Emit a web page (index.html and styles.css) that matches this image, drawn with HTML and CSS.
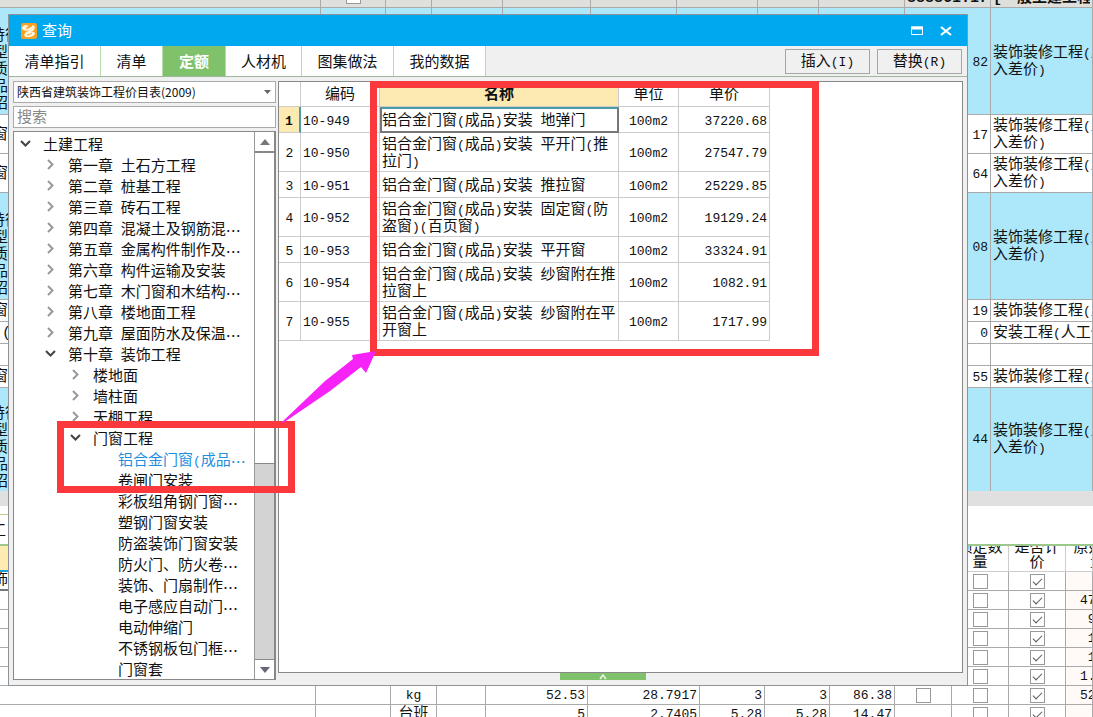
FILE: index.html
```html
<!DOCTYPE html>
<html lang="zh-CN">
<head>
<meta charset="utf-8">
<title>查询</title>
<link rel="stylesheet" href="styles.css">
</head>
<body>
<main class="desktop">
  <div class="workspace">
    <table class="grid upper">
      <colgroup><col class="w321"><col class="w65"><col class="w46"><col class="w71"><col class="w88"><col class="w86"><col class="w81"><col class="w61"><col class="w86"><col class="w86"><col></colgroup>
      <tr class="strip"><td></td><td><div class="cut mid"><input type="checkbox" aria-label="汇总"></div></td><td></td><td></td><td></td><td></td><td></td><td></td><td></td><td><div class="cut end">888861.17</div></td><td><div class="cut">[一般土建工程]</div></td></tr>
      <tr class="h107 blue"><td><div class="feature"><br><span class="pair">特征</span><br>型<br>质<br>品<br>招</div></td><td></td><td></td><td></td><td></td><td></td><td></td><td></td><td></td><td class="num">82</td><td>装饰装修工程<span class="n">(</span>人<br>入差价<span class="n">)</span></td></tr>
      <tr class="h39"><td><div class="feature">窗</div></td><td></td><td></td><td></td><td></td><td></td><td></td><td></td><td></td><td class="num">17</td><td>装饰装修工程<span class="n">(</span>人<br>入差价<span class="n">)</span></td></tr>
      <tr class="h39"><td><div class="feature">窗</div></td><td></td><td></td><td></td><td></td><td></td><td></td><td></td><td></td><td class="num">64</td><td>装饰装修工程<span class="n">(</span>人<br>入差价<span class="n">)</span></td></tr>
      <tr class="h107 blue"><td><div class="feature"><br><span class="pair">特征</span><br>型<br>质<br>品<br>招</div></td><td></td><td></td><td></td><td></td><td></td><td></td><td></td><td></td><td class="num">08</td><td>装饰装修工程<span class="n">(</span>人<br>入差价<span class="n">)</span></td></tr>
      <tr class="h22"><td><div class="feature">窗</div></td><td></td><td></td><td></td><td></td><td></td><td></td><td></td><td></td><td class="num">19</td><td>装饰装修工程<span class="n">(</span>人</td></tr>
      <tr class="h22"><td>(</td><td></td><td></td><td></td><td></td><td></td><td></td><td></td><td></td><td class="num">0</td><td>安装工程<span class="n">(</span>人工价</td></tr>
      <tr class="h22"><td></td><td></td><td></td><td></td><td></td><td></td><td></td><td></td><td></td><td></td><td></td></tr>
      <tr class="h22"><td><div class="feature">窗</div></td><td></td><td></td><td></td><td></td><td></td><td></td><td></td><td></td><td class="num">55</td><td>装饰装修工程<span class="n">(</span>人</td></tr>
      <tr class="h103 blue last"><td><div class="feature"><br><span class="pair">特征</span><br>型<br>质<br>品<br>招</div></td><td></td><td></td><td></td><td></td><td></td><td></td><td></td><td></td><td class="num">44</td><td>装饰装修工程<span class="n">(</span>人<br>入差价<span class="n">)</span></td></tr>
    </table>
    <div class="hscroll"></div>
    <div class="tabgap"><div class="pane">工</div></div>
    <table class="grid lower">
      <colgroup><col class="w316"><col class="w75"><col class="w46"><col class="w49"><col class="w102"><col class="w112"><col class="w65"><col class="w65"><col class="w65"><col class="w57"><col class="w57"><col class="w57"><col></colgroup>
      <tr class="head"><th class="current"></th><th></th><th></th><th></th><th></th><th></th><th></th><th></th><th></th><th></th><th><div>锁定数<br>量</div></th><th><div>是否计<br>价</div></th><th><div class="tail">原始<br>&nbsp;&nbsp;量</div></th></tr>
      <tr><td class="focus"><div class="feature">饰</div></td><td></td><td></td><td></td><td></td><td></td><td></td><td></td><td></td><td></td><td class="c"><input type="checkbox" aria-label="锁定数量"></td><td class="c"><input type="checkbox" aria-label="是否计价" checked></td><td class="orig"></td></tr>
      <tr><td></td><td></td><td></td><td></td><td></td><td></td><td></td><td></td><td></td><td></td><td class="c"><input type="checkbox" aria-label="锁定数量"></td><td class="c"><input type="checkbox" aria-label="是否计价" checked></td><td class="orig">47</td></tr>
      <tr><td></td><td></td><td></td><td></td><td></td><td></td><td></td><td></td><td></td><td></td><td class="c"><input type="checkbox" aria-label="锁定数量"></td><td class="c"><input type="checkbox" aria-label="是否计价" checked></td><td class="orig">&nbsp;9</td></tr>
      <tr><td></td><td></td><td></td><td></td><td></td><td></td><td></td><td></td><td></td><td></td><td class="c"><input type="checkbox" aria-label="锁定数量"></td><td class="c"><input type="checkbox" aria-label="是否计价" checked></td><td class="orig">&nbsp;1</td></tr>
      <tr><td></td><td></td><td></td><td></td><td></td><td></td><td></td><td></td><td></td><td></td><td class="c"><input type="checkbox" aria-label="锁定数量"></td><td class="c"><input type="checkbox" aria-label="是否计价" checked></td><td class="orig">&nbsp;1</td></tr>
      <tr><td></td><td></td><td></td><td></td><td></td><td></td><td></td><td></td><td></td><td></td><td class="c"><input type="checkbox" aria-label="锁定数量"></td><td class="c"><input type="checkbox" aria-label="是否计价" checked></td><td class="orig">1.</td></tr>
      <tr><td></td><td></td><td class="c n">kg</td><td></td><td class="num">52.53</td><td class="num">28.7917</td><td class="num">3</td><td class="num">3</td><td class="num">86.38</td><td class="c"><input type="checkbox" aria-label="暂估"></td><td class="c"><input type="checkbox" aria-label="锁定数量"></td><td class="c"><input type="checkbox" aria-label="是否计价" checked></td><td class="orig">52</td></tr>
      <tr><td></td><td></td><td class="c">台班</td><td></td><td class="num">5</td><td class="num">2.7405</td><td class="num">5.28</td><td class="num">5.28</td><td class="num">14.47</td><td></td><td class="c"><input type="checkbox" aria-label="锁定数量"></td><td class="c"><input type="checkbox" aria-label="是否计价" checked></td><td class="orig"></td></tr>
    </table>
  </div>

  <section class="dialog" aria-label="查询">
    <header class="titlebar">
      <svg class="logo" viewBox="0 0 16 16" aria-hidden="true"><rect width="16" height="16" rx="2" fill="#f7a021"/><path d="M1 6Q1 2 5 2L8 3Q5 4 5 6Q10 5 12 2Q15 3 13 7Q11 9 9 9Q14 8 14 11Q11 15 5 14Q2 13 4 10L8 7Q4 9 1 6Z" fill="#fff3dc"/><path d="M6 12Q9 12 11 10" fill="none" stroke="#f7a021"/></svg>
      <h1>查询</h1>
      <button class="winbtn" aria-label="最大化"><svg width="12" height="10" viewBox="0 0 12 10"><path d="M.5 1H11.500V8.500H.5Z" fill="none" stroke="#fff"/><path d="M0 2H12" stroke="#fff" stroke-width="3"/></svg></button>
      <button class="winbtn" aria-label="关闭"><svg width="12" height="10" viewBox="0 0 12 10"><path d="M1 1L11 9M11 1L1 9" stroke="#fff" stroke-width="2.2"/></svg></button>
    </header>
    <nav class="tabs">
      <button class="tab wide">清单指引</button><button class="tab">清单</button><button class="tab active">定额</button><button class="tab t76">人材机</button><button class="tab wide">图集做法</button><button class="tab wide">我的数据</button>
      <div class="actions"><button>插入<span class="n">(I)</span></button><button>替换<span class="n">(R)</span></button></div>
    </nav>
    <div class="body">
      <div class="left">
        <div class="combo"><select aria-label="定额库"><option>陕西省建筑装饰工程价目表(2009)</option></select><svg width="7" height="4" viewBox="0 0 7 4"><path d="M0 0H7L3.500 4Z" fill="#666"/></svg></div>
        <input class="search" type="text" placeholder="搜索" aria-label="搜索">
        <div class="treebox">
          <ul class="tree">
            <li class="l0"><svg class="down" viewBox="0 0 11 7"><path d="M1 1L5.500 5.500L10 1"/></svg>土建工程</li>
            <li class="l1"><svg viewBox="0 0 7 11"><path d="M1 1L5.500 5.500L1 10"/></svg>第一章<span class="n"> </span>土石方工程</li>
            <li class="l1"><svg viewBox="0 0 7 11"><path d="M1 1L5.500 5.500L1 10"/></svg>第二章<span class="n"> </span>桩基工程</li>
            <li class="l1"><svg viewBox="0 0 7 11"><path d="M1 1L5.500 5.500L1 10"/></svg>第三章<span class="n"> </span>砖石工程</li>
            <li class="l1"><svg viewBox="0 0 7 11"><path d="M1 1L5.500 5.500L1 10"/></svg>第四章<span class="n"> </span>混凝土及钢筋混<span class="e">…</span></li>
            <li class="l1"><svg viewBox="0 0 7 11"><path d="M1 1L5.500 5.500L1 10"/></svg>第五章<span class="n"> </span>金属构件制作及<span class="e">…</span></li>
            <li class="l1"><svg viewBox="0 0 7 11"><path d="M1 1L5.500 5.500L1 10"/></svg>第六章<span class="n"> </span>构件运输及安装</li>
            <li class="l1"><svg viewBox="0 0 7 11"><path d="M1 1L5.500 5.500L1 10"/></svg>第七章<span class="n"> </span>木门窗和木结构<span class="e">…</span></li>
            <li class="l1"><svg viewBox="0 0 7 11"><path d="M1 1L5.500 5.500L1 10"/></svg>第八章<span class="n"> </span>楼地面工程</li>
            <li class="l1"><svg viewBox="0 0 7 11"><path d="M1 1L5.500 5.500L1 10"/></svg>第九章<span class="n"> </span>屋面防水及保温<span class="e">…</span></li>
            <li class="l1"><svg class="down" viewBox="0 0 11 7"><path d="M1 1L5.500 5.500L10 1"/></svg>第十章<span class="n"> </span>装饰工程</li>
            <li class="l2"><svg viewBox="0 0 7 11"><path d="M1 1L5.500 5.500L1 10"/></svg>楼地面</li>
            <li class="l2"><svg viewBox="0 0 7 11"><path d="M1 1L5.500 5.500L1 10"/></svg>墙柱面</li>
            <li class="l2"><svg viewBox="0 0 7 11"><path d="M1 1L5.500 5.500L1 10"/></svg>天棚工程</li>
            <li class="l2"><svg class="down" viewBox="0 0 11 7"><path d="M1 1L5.500 5.500L10 1"/></svg>门窗工程</li>
            <li class="l3 selected">铝合金门窗<span class="n">(</span>成品<span class="e">…</span></li>
            <li class="l3">卷闸门安装</li>
            <li class="l3">彩板组角钢门窗<span class="e">…</span></li>
            <li class="l3">塑钢门窗安装</li>
            <li class="l3">防盗装饰门窗安装</li>
            <li class="l3">防火门、防火卷<span class="e">…</span></li>
            <li class="l3">装饰、门扇制作<span class="e">…</span></li>
            <li class="l3">电子感应自动门<span class="e">…</span></li>
            <li class="l3">电动伸缩门</li>
            <li class="l3">不锈钢板包门框<span class="e">…</span></li>
            <li class="l3">门窗套</li>
          </ul>
          <div class="scroll">
            <button aria-label="向上滚动"><svg width="10" height="6" viewBox="0 0 10 6"><path d="M0 6L5 0L10 6Z" fill="#777"/></svg></button>
            <div class="thumb"></div>
            <div class="track"></div>
            <button aria-label="向下滚动"><svg width="10" height="6" viewBox="0 0 10 6"><path d="M0 0L5 6L10 0Z" fill="#667"/></svg></button>
          </div>
        </div>
      </div>
      <div class="right">
        <div class="results">
          <table class="quota">
            <colgroup><col class="w22"><col class="w79"><col class="w239"><col class="w60"><col class="w91"></colgroup>
            <tr><th></th><th>编码</th><th class="on">名称</th><th>单位</th><th>单价</th></tr>
            <tr class="h26"><td class="idx on">1</td><td class="code">10-949</td><td class="picked">铝合金门窗<span class="n">(</span>成品<span class="n">)</span>安装<span class="n"> </span>地弹门</td><td class="unit">100m2</td><td class="num">37220.68</td></tr>
            <tr class="h39"><td class="idx">2</td><td class="code">10-950</td><td>铝合金门窗<span class="n">(</span>成品<span class="n">)</span>安装<span class="n"> </span>平开门<span class="n">(</span>推<br>拉门<span class="n">)</span></td><td class="unit">100m2</td><td class="num">27547.79</td></tr>
            <tr class="h26"><td class="idx">3</td><td class="code">10-951</td><td>铝合金门窗<span class="n">(</span>成品<span class="n">)</span>安装<span class="n"> </span>推拉窗</td><td class="unit">100m2</td><td class="num">25229.85</td></tr>
            <tr class="h39"><td class="idx">4</td><td class="code">10-952</td><td>铝合金门窗<span class="n">(</span>成品<span class="n">)</span>安装<span class="n"> </span>固定窗<span class="n">(</span>防<br>盗窗<span class="n">)(</span>百页窗<span class="n">)</span></td><td class="unit">100m2</td><td class="num">19129.24</td></tr>
            <tr class="h26"><td class="idx">5</td><td class="code">10-953</td><td>铝合金门窗<span class="n">(</span>成品<span class="n">)</span>安装<span class="n"> </span>平开窗</td><td class="unit">100m2</td><td class="num">33324.91</td></tr>
            <tr class="h39"><td class="idx">6</td><td class="code">10-954</td><td>铝合金门窗<span class="n">(</span>成品<span class="n">)</span>安装<span class="n"> </span>纱窗附在推<br>拉窗上</td><td class="unit">100m2</td><td class="num">1082.91</td></tr>
            <tr class="h39"><td class="idx">7</td><td class="code">10-955</td><td>铝合金门窗<span class="n">(</span>成品<span class="n">)</span>安装<span class="n"> </span>纱窗附在平<br>开窗上</td><td class="unit">100m2</td><td class="num">1717.99</td></tr>
          </table>
        </div>
        <button class="handle" aria-label="展开"><svg width="8" height="6" viewBox="0 0 8 6"><path d="M1 5L4 1L7 5" fill="none" stroke="#e9f7e4" stroke-width="1.500"/></svg></button>
      </div>
    </div>
  </section>

  <div class="mark mark-table"></div>
  <div class="mark mark-tree"></div>
  <svg class="arrow" viewBox="0 0 96 74" aria-hidden="true"><path d="M1 73L45 31L73 9L72 5L96 1L86 23L81 17L50 41L3 73Z" fill="#f722f7"/></svg>
</main>
</body>
</html>
```
FILE: styles.css
```css
* { box-sizing: border-box; }
body {
  margin: 0;
  font: 15px/17px "Liberation Mono", "Noto Sans CJK SC", monospace;
  color: #111;
  background: #fff;
}
button, input, select { font: inherit; color: inherit; margin: 0; }
.n, .num { font-family: "Liberation Mono", monospace; font-size: 13px; }
.n { white-space: pre; }
.e { font-family: "Noto Sans CJK SC", sans-serif; }

.desktop { position: relative; height: 100vh; overflow: hidden; }

/* Background sheets */
table { border-collapse: separate; border-spacing: 0; table-layout: fixed; }
.grid { width: 100%; }
.grid td, .grid th {
  padding: 2px 2px 0;
  border-right: 1px solid #aaa;
  border-bottom: 1px solid #aaa;
  white-space: nowrap;
  overflow: hidden;
  font-weight: 400;
}
.num { text-align: right; }
.blue { background: #ade8fa; }
.grid .last td { padding-top: 0; border-bottom: 0; }
.feature { margin-left: -9px; }
.pair { margin-left: -3px; }
.grid .strip td { height: 8px; padding: 0 2px; background: #dfe0dc; }
.cut { height: 7px; display: flex; align-items: flex-end; overflow: hidden; font-weight: 700; }
.cut.end { justify-content: flex-end; }
.cut.mid { justify-content: center; padding-bottom: 3px; }
.hscroll { height: 15px; background: #e0e0e0; }
.tabgap { height: 40px; padding-top: 8px; border-bottom: 2px solid #9cc88c; }
.pane { width: 316px; height: 30px; padding-top: 8px; border-top: 1px solid #c5c98f; text-indent: -9px; overflow: hidden; }
.grid.lower td { height: 19px; line-height: 16px; }
.grid.lower th { height: 26px; padding: 0; border-color: #ccc; line-height: 15px; }
.lower th div { height: 25px; display: flex; align-items: flex-end; justify-content: center; text-align: center; overflow: hidden; }
.grid.lower .tail { justify-content: flex-start; padding-left: 6px; }
.grid.lower .current { background: #fdebb0; border-bottom: 2px solid #1b9fdc; }
.grid.lower .focus { padding-top: 1px; border-bottom: 2px solid #777; }
.grid.lower .c { padding-top: 0; text-align: center; line-height: 0; }
.grid.lower .c.n { padding-top: 2px; font-size: 13px; line-height: 16px; }
.grid.lower tr:last-child .c { padding-top: 2px; line-height: 16px; }
.grid.lower .orig { padding-left: 14px; background: #fffaf7; font-size: 13px; }
input[type="checkbox"] {
  appearance: none;
  width: 15px;
  height: 15px;
  border: 1px solid #999;
  background: #fff;
  display: inline-grid;
  justify-items: center;
  align-items: start;
  padding-top: 3px;
  flex: none;
  vertical-align: middle;
}
input[type="checkbox"]:checked::after {
  content: "";
  width: 8px;
  height: 4px;
  border-left: 1px solid #555;
  border-bottom: 1px solid #555;
  transform: rotate(-45deg);
}

.w22 { width: 22px; } .w46 { width: 46px; } .w49 { width: 49px; }
.w57 { width: 57px; } .w60 { width: 60px; } .w61 { width: 61px; }
.w65 { width: 65px; } .w71 { width: 71px; } .w75 { width: 75px; }
.w79 { width: 79px; } .w81 { width: 81px; } .w86 { width: 86px; }
.w88 { width: 88px; } .w91 { width: 91px; } .w102 { width: 102px; }
.w112 { width: 112px; } .w239 { width: 239px; } .w316 { width: 316px; }
.w321 { width: 321px; }
.h22 td { height: 22px; } .h26 td { height: 26px; } .h39 td { height: 39px; }
.h103 td { height: 103px; } .h107 td { height: 107px; }

/* Query dialog */
.dialog {
  position: absolute;
  inset: 14px 125px 31px 8px;
  display: flex;
  flex-direction: column;
  border: 1px solid #8c9499;
  background: #f0f0f0;
}
.titlebar { height: 31px; flex: none; display: flex; align-items: center; padding: 0 14px 0 12px; background: #00a8f0; color: #fff; }
.logo { width: 16px; height: 16px; }
.titlebar h1 { flex: 1; margin: 0 0 0 5px; padding-top: 4px; font-size: 15px; font-weight: 400; }
.winbtn { width: 14px; height: 14px; padding: 0; border: 0; background: none; display: grid; place-items: center; }
.winbtn + .winbtn { margin-left: 15px; }

.tabs { height: 31px; flex: none; display: flex; border-bottom: 1px solid #9fb79a; }
.tab { width: 62px; padding: 5px 0 0; border: 0; border-right: 1px solid #b6dca8; background: #fff; }
.tab.wide { width: 92px; }
.tab.t76 { width: 76px; }
.tab.active { background: #80c26c; color: #fff; font-weight: 700; width: 63px; }
.actions { margin-left: auto; display: flex; gap: 7px; padding: 3px 5px 2px 0; }
.actions button { width: 85px; padding: 2px 0 0; border: 1px solid #a6a6a6; background: #f0f0f0; }

.body { flex: 1; min-height: 0; display: flex; gap: 2px; padding: 4px 4px 5px; }
.left { width: 263px; flex: none; display: flex; flex-direction: column; gap: 3px; }
.combo { display: grid; height: 22px; flex: none; align-items: center; }
.combo select { grid-area: 1 / 1; height: 22px; padding: 0 3px 2px; appearance: none; border: 1px solid #aaa; border-radius: 0; background: #fff; font: 12px "Noto Sans CJK SC", sans-serif; }
.combo svg { grid-area: 1 / 1; justify-self: end; margin-right: 5px; }
.search { height: 22px; flex: none; padding: 2px 3px 0; border: 1px solid #aaa; background: #fff; }
.search::placeholder { color: #888; opacity: 1; }
.treebox { flex: 1; min-height: 0; display: flex; border: 1px solid #888; border-right-width: 2px; background: #fff; }
.tree { flex: 1; min-width: 0; margin: 0; padding: 2px 0 0; list-style: none; overflow: hidden; }
.tree li { display: flex; align-items: center; height: 21px; padding-top: 3px; white-space: pre; }
.tree svg { width: 7px; height: 11px; flex: none; margin: 0 14px 6px 3px; overflow: visible; fill: none; stroke: #999; stroke-width: 2; }
.tree svg.down { width: 11px; height: 7px; margin: 0 12px 6px 1px; stroke: #444; }
.l0 { padding-left: 5px; }
.l1 { padding-left: 30px; }
.l2 { padding-left: 55px; }
.l3 { padding-left: 104px; }
.selected { color: #1c8fe0; }
.scroll { width: 20px; display: flex; flex-direction: column; border-left: 1px solid #999; background: #d3d3d3; }
.scroll button { height: 20px; padding: 0; border: 0; border-bottom: 1px solid #888; background: #fff; display: grid; place-items: center; }
.scroll button:last-child { border-top: 1px solid #888; border-bottom: 0; }
.thumb { flex: 311; border-top: 1px solid #888; border-bottom: 1px solid #888; background: #fff; }
.track { flex: 195; }

.right { flex: 1; min-width: 0; display: flex; flex-direction: column; }
.results { flex: 1; min-height: 0; border: 1px solid #888; background: #fff; }
.quota { width: 491px; }
.quota th, .quota td { padding: 3px 2px 0; border-right: 1px solid #ccc; border-bottom: 1px solid #ccc; white-space: nowrap; }
.quota th { height: 25px; font-weight: 400; }
.quota .on { background: #fdeab0; font-weight: 700; }
.quota .idx { text-align: center; font-size: 13px; }
.quota .idx.on { border-right: 2px solid #4d9aa6; }
.quota .code { font-size: 13px; }
.quota .unit { text-align: center; font-size: 13px; }
.quota .picked { padding: 3px 0 0; border: 2px solid #777; border-top-color: #4d9aa6; }
.handle { height: 7px; width: 86px; margin-left: 282px; padding: 0; border: 0; background: #80c26c; display: grid; place-items: center; }

/* Annotations drawn over the window */
.mark { position: absolute; border: 7px solid #fb383b; pointer-events: none; }
.mark-table { left: 370px; top: 81px; width: 449px; height: 275px; }
.mark-tree { left: 57px; top: 421px; width: 238px; height: 72px; }
.arrow { position: absolute; left: 280px; top: 350px; width: 96px; height: 74px; pointer-events: none; }
```
